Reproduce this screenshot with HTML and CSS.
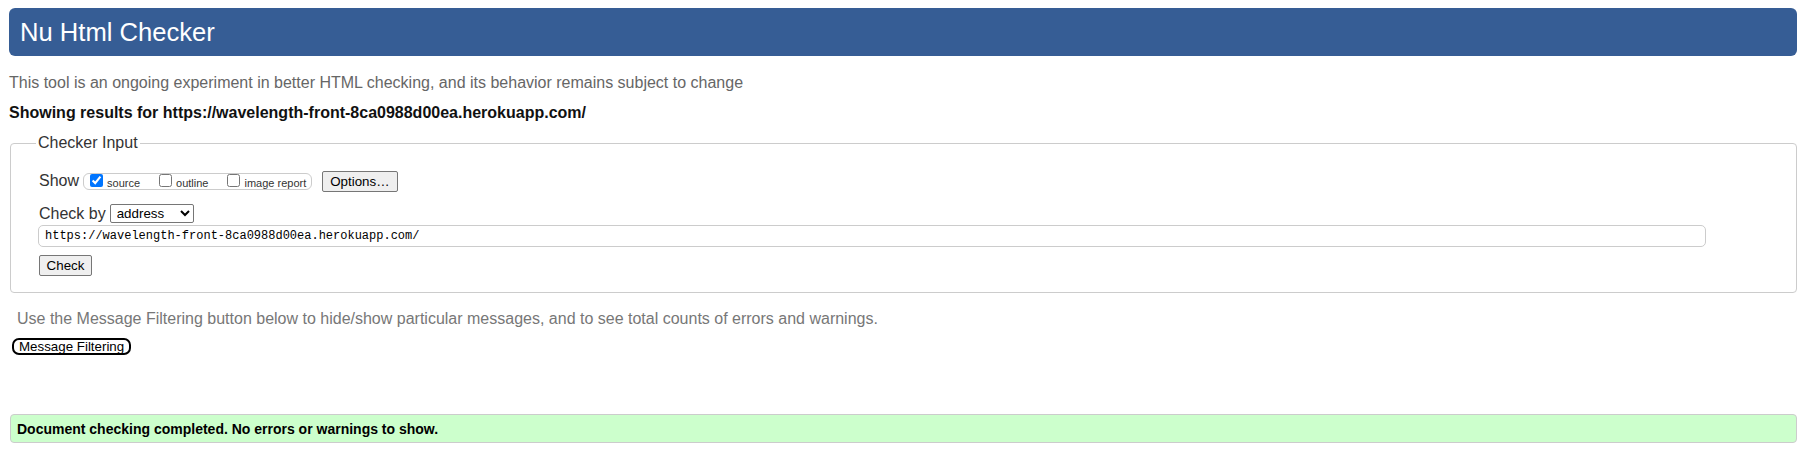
FILE: index.html
```html
<!DOCTYPE html>
<html lang="en">
<head>
<meta charset="utf-8">
<title>Nu Html Checker</title>
<link rel="stylesheet" href="styles.css">
</head>
<body>
<h1 class="title">Nu Html Checker</h1>
<p class="tagline">This tool is an ongoing experiment in better HTML checking, and its behavior remains subject to change</p>
<p class="results-for">Showing results for https://wavelength-front-8ca0988d00ea.herokuapp.com/</p>
<form class="checker-form">
  <fieldset class="checker-input">
    <legend class="legend">Checker Input</legend>
    <div class="row show-row">
      <span class="label">Show</span>
      <span class="show-box">
        <label class="opt"><input class="cb" type="checkbox" checked><span>source</span></label>
        <label class="opt"><input class="cb" type="checkbox"><span>outline</span></label>
        <label class="opt last"><input class="cb" type="checkbox"><span>image report</span></label>
      </span>
      <button type="button" class="btn options">Options…</button>
    </div>
    <div class="row by-row">
      <span class="label">Check by</span>
      <select class="select"><option>address</option></select>
    </div>
    <div class="url-row">
      <input class="url" type="text" value="https://wavelength-front-8ca0988d00ea.herokuapp.com/">
    </div>
    <div class="submit-row">
      <button type="button" class="btn check">Check</button>
    </div>
  </fieldset>
</form>
<p class="filter-note">Use the Message Filtering button below to hide/show particular messages, and to see total counts of errors and warnings.</p>
<div class="filter-row"><button type="button" class="filter-btn">Message Filtering</button></div>
<div class="success">Document checking completed. No errors or warnings to show.</div>
</body>
</html>
```
FILE: styles.css
```css
html, body {
  margin: 0;
  padding: 0;
  background: #fff;
}
body {
  font-family: "Liberation Sans", Arial, sans-serif;
  font-size: 16px;
  color: #333;
}
.title {
  margin: 8px 14px 0 9px;
  height: 48px;
  padding: 0 11px;
  box-sizing: border-box;
  background: #365d95;
  color: #fff;
  border-radius: 6px;
  font-weight: normal;
  font-size: 25.6px;
  line-height: 48px;
}
.tagline {
  margin: 18px 0 0 9px;
  line-height: 18px;
  color: #666;
}
.results-for {
  margin: 12px 0 0 9px;
  line-height: 18px;
  font-weight: bold;
  color: #111;
}
.checker-form {
  margin: 12px 14px 0 10px;
}
.checker-input {
  margin: 0;
  border: 1px solid #ccc;
  border-radius: 4px;
  padding: 18px 0 16px 28px;
}
.legend {
  padding: 0 2px;
  margin-left: -3px;
  line-height: 18px;
  color: #333;
}
.row {
  display: flex;
  align-items: center;
}
.show-row {
  height: 22px;
}
.label {
  line-height: 18px;
  margin-right: 4px;
}
.show-box {
  display: flex;
  align-items: flex-start;
  height: 17px;
  border: 1px solid #ccc;
  border-radius: 6px;
  padding: 0 5px 0 6px;
  margin-right: 10px;
  box-sizing: border-box;
}
.opt {
  display: flex;
  align-items: flex-start;
  font-size: 11px;
  line-height: 15px;
  margin-right: 19px;
}
.opt.last {
  margin-right: 0;
}
.opt span {
  padding-top: 3px;
  line-height: 13px;
}
.cb {
  width: 13px;
  height: 13px;
  margin: 0 4px 0 0;
}
.btn {
  font-family: "Liberation Sans", Arial, sans-serif;
  font-size: 13.33px;
  color: #000;
  background: #efefef;
  border: 1px solid #767676;
  border-radius: 2px;
  padding: 1px 6px;
  height: 21px;
  box-sizing: border-box;
}
.options {
  padding: 1px 7px;
}
.by-row {
  margin-top: 12px;
  height: 19px;
}
.by-row .label {
  margin-right: 4px;
}
.select {
  font-family: "Liberation Sans", Arial, sans-serif;
  font-size: 13.33px;
  color: #000;
  height: 19px;
  width: 84px;
  padding: 0 0 0 2px;
  border: 1px solid #767676;
  border-radius: 2px;
  background: #fff;
}
.url-row {
  margin: 2px 0 0 -1px;
  padding-right: 90px;
}
.url {
  display: block;
  width: 100%;
  height: 22px;
  box-sizing: border-box;
  border: 1px solid #ccc;
  border-radius: 5px;
  padding: 0 6px;
  font-family: "Liberation Mono", "DejaVu Sans Mono", monospace;
  font-size: 12px;
  color: #000;
  background: #fff;
}
.submit-row {
  margin-top: 8px;
}
.check {
  width: 53px;
}
.filter-note {
  margin: 17px 0 0 17px;
  line-height: 18px;
  color: #777;
}
.filter-row {
  margin: 9px 0 0 12px;
}
.filter-btn {
  font-family: "Liberation Sans", Arial, sans-serif;
  font-size: 13.33px;
  color: #000;
  background: #fff;
  border: 2px solid #000;
  border-radius: 7px;
  height: 17px;
  padding: 0 5px;
  line-height: 13px;
  box-sizing: border-box;
}
.success {
  margin: 59px 14px 0 10px;
  height: 29px;
  box-sizing: border-box;
  background: #ccffcc;
  border: 1px solid #ccc;
  border-radius: 4px;
  padding: 0 6px;
  display: flex;
  align-items: center;
  font-size: 14px;
  font-weight: bold;
  color: #000;
}
```
